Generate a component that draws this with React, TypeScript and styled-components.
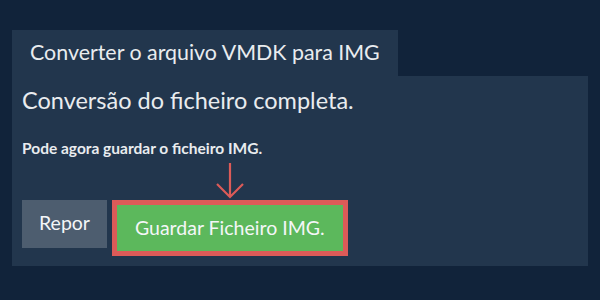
import styled, { createGlobalStyle } from "styled-components"

const GlobalStyle = createGlobalStyle`
  html, body {
    margin: 0;
    padding: 0;
    background: #11233a;
    font-family: Lato, "Open Sans", sans-serif;
  }
`

const Page = styled.div`
  width: 600px;
  height: 300px;
  box-sizing: border-box;
  padding: 30px 12px 0;
  background: #11233a;
`

const Tab = styled.div`
  display: inline-block;
  height: 46px;
  line-height: 44px;
  padding: 0 18px;
  background: #22364d;
  color: #e9ecef;
  font-size: 21.4px;
`

const Panel = styled.div`
  width: 576px;
  height: 190px;
  box-sizing: border-box;
  padding: 6px 10px 0;
  background: #22364d;
  color: #e9ecef;
`

const Heading = styled.h2`
  margin: 0;
  font-size: 23.5px;
  font-weight: 400;
  line-height: 36px;
`

const Note = styled.p`
  margin: 20px 0 0;
  font-size: 15.5px;
  font-weight: 700;
  line-height: 20px;
`

const ArrowRow = styled.div`
  height: 42px;
  padding-left: 193px;
`

const Actions = styled.div`
  display: flex;
  align-items: flex-start;
  gap: 5px;
`

const Button = styled.button<{ $primary?: boolean }>`
  font-family: inherit;
  font-size: 19.5px;
  color: #f4f6f8;
  border: ${({ $primary }) => ($primary ? "5px solid #dc5b58" : "none")};
  background: ${({ $primary }) => ($primary ? "#5cb85c" : "#4d5d6f")};
  height: ${({ $primary }) => ($primary ? "56px" : "48px")};
  padding: ${({ $primary }) => ($primary ? "0 18px 2px" : "0 17px 3px")};
  cursor: pointer;
`

export default function App() {
  return (
    <>
      <GlobalStyle />
      <Page>
        <Tab>Converter o arquivo VMDK para IMG</Tab>
        <Panel>
          <Heading>Conversão do ficheiro completa.</Heading>
          <Note>Pode agora guardar o ficheiro IMG.</Note>
          <ArrowRow>
            <svg width="30" height="42" viewBox="0 0 30 42">
              <path
                d="M15 5 V39 M2 26 L15 39 L28 26"
                fill="none"
                stroke="#dc5b58"
                strokeWidth="2.2"
              />
            </svg>
          </ArrowRow>
          <Actions>
            <Button>Repor</Button>
            <Button $primary>Guardar Ficheiro IMG.</Button>
          </Actions>
        </Panel>
      </Page>
    </>
  )
}
